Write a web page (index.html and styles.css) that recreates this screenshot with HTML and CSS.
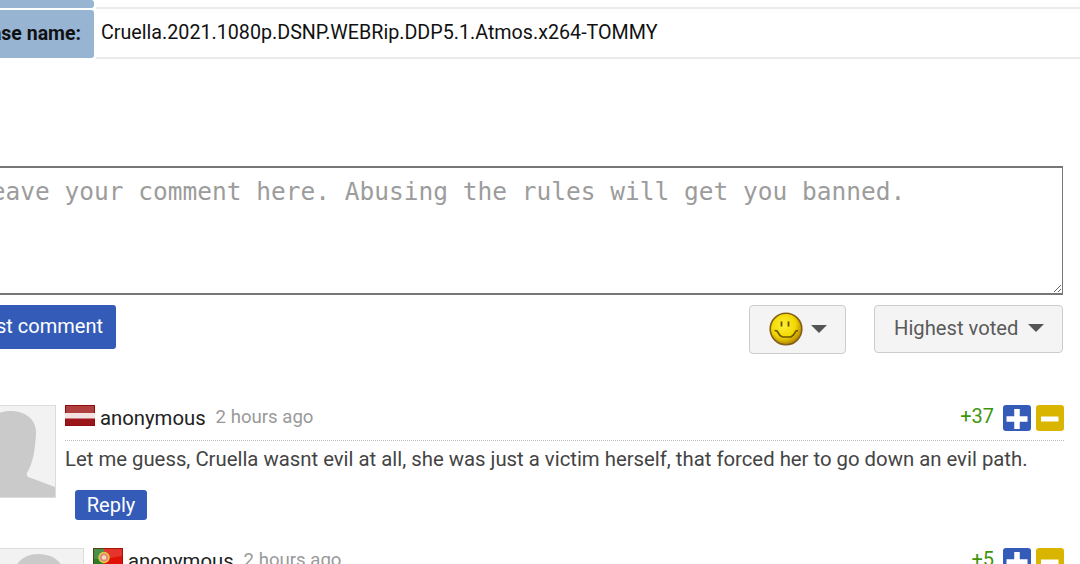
FILE: index.html
```
<!DOCTYPE html>
<html lang="en">
<head>
    <meta charset="UTF-8">
    <meta name="viewport" content="width=device-width, initial-scale=1.0">
    <title>Cruella subtitles</title>
    <link rel="stylesheet" href="styles.css">
</head>
<body>
    <div class="page">
        <div class="info">
            <div class="info-row previous">
                <div class="info-label"></div>
                <div class="info-value"></div>
            </div>
            <div class="info-row">
                <div class="info-label">Release name:</div>
                <div class="info-value"><span class="release">Cruella.2021.1080p.DSNP.WEBRip.DDP5.1.Atmos.x264-TOMMY</span></div>
            </div>
        </div>

        <div class="content">
            <textarea class="comment-box" placeholder="Leave your comment here. Abusing the rules will get you banned."></textarea>
            <div class="toolbar">
                <button class="post-btn">Post comment</button>
                <button class="dropdown smiley-btn">
                    <svg class="smiley" width="34" height="34" viewBox="0 0 34 34">
                        <defs>
                            <radialGradient id="face" cx="42%" cy="38%" r="64%">
                                <stop offset="0" stop-color="#ffee38"/>
                                <stop offset=".6" stop-color="#f2d800"/>
                                <stop offset="1" stop-color="#b07f00"/>
                            </radialGradient>
                        </defs>
                        <circle cx="17" cy="17" r="15.8" fill="url(#face)" stroke="#836019" stroke-width="1.6"/>
                        <path d="M12.5 9.5v5M19.5 9.5v5" stroke="#6b5200" stroke-width="1.8"/>
                        <path d="M5.5 18.5l2.500 .5 3 4.500 2.500 1.500h8.500l2.500-2 2.500-4 2-.5" fill="none" stroke="#705600" stroke-width="1.7"/>
                    </svg>
                    <span class="caret"></span>
                </button>
                <button class="dropdown sort-btn"><span class="sort-text">Highest voted</span><span class="caret"></span></button>
            </div>

            <div class="comment">
                <svg class="avatar" width="93" height="93" viewBox="0 0 93 93">
                    <rect x=".5" y=".5" width="92" height="92" fill="#f2f2f2" stroke="#dcdcdc"/>
                    <path d="M1 92V81c11-4 22-8 29-12-3-10-7-20-8-32C20 16 32 6 47 6s27 8 26 23c-1 14-2 27-9 39-1 3 1 4 4 5l24 9v10z" fill="#cacaca"/>
                </svg>
                <div class="comment-body">
                    <div class="comment-head">
                        <svg class="flag" width="30" height="22" viewBox="0 0 30 22">
                            <rect width="30" height="21" fill="#8e0d10"/>
                            <rect x="1" y="1" width="28" height="7" fill="#b04040"/>
                            <rect x="1" y="13" width="28" height="7" fill="#9c1518"/>
                            <rect y="8" width="30" height="5.500" fill="#f3e2e2"/>
                        </svg>
                        <span class="name">anonymous</span>
                        <span class="time">2 hours ago</span>
                        <span class="score">+37</span>
                        <svg class="vote" width="28" height="26" viewBox="0 0 28 26">
                            <rect width="28" height="26" rx="3" fill="#345bb8"/>
                            <path d="M14 4v20M3.500 14h21" stroke="#fff" stroke-width="5.500"/>
                        </svg>
                        <svg class="vote down" width="28" height="26" viewBox="0 0 28 26">
                            <rect width="28" height="26" rx="3" fill="#d9b500"/>
                            <path d="M5 14h17.500" stroke="#fff" stroke-width="5"/>
                        </svg>
                    </div>
                    <p class="comment-text">Let me guess, Cruella wasnt evil at all, she was just a victim herself, that forced her to go down an evil path.</p>
                    <button class="reply-btn">Reply</button>
                </div>
            </div>

            <div class="comment reply">
                <svg class="avatar" width="93" height="93" viewBox="0 0 93 93">
                    <rect x=".5" y=".5" width="92" height="92" fill="#f2f2f2" stroke="#dcdcdc"/>
                    <path d="M1 92V81c11-4 22-8 29-12-3-10-7-20-8-32C20 16 32 6 47 6s27 8 26 23c-1 14-2 27-9 39-1 3 1 4 4 5l24 9v10z" fill="#cacaca"/>
                </svg>
                <div class="comment-body">
                    <div class="comment-head">
                        <svg class="flag" width="30" height="22" viewBox="0 0 30 22">
                            <rect width="30" height="22" fill="#e01208"/>
                            <rect width="11" height="22" fill="#2c7b27"/>
                            <path d="M1 1h28v7l-18 3H1z" fill="#fff" opacity=".15"/>
                            <path d="M.5 22V.5h29V22" fill="none" stroke="#7c1408" opacity=".6"/>
                            <circle cx="11" cy="9.500" r="5" fill="#e2877a" stroke="#e0d040" stroke-width="1.400"/>
                            <circle cx="11" cy="9.500" r="2.200" fill="#f3dcc0"/>
                        </svg>
                        <span class="name">anonymous</span>
                        <span class="time">2 hours ago</span>
                        <span class="score">+5</span>
                        <svg class="vote" width="28" height="26" viewBox="0 0 28 26">
                            <rect width="28" height="26" rx="3" fill="#345bb8"/>
                            <path d="M14 4v20M3.500 14h21" stroke="#fff" stroke-width="5.500"/>
                        </svg>
                        <svg class="vote down" width="28" height="26" viewBox="0 0 28 26">
                            <rect width="28" height="26" rx="3" fill="#d9b500"/>
                            <path d="M5 14h17.500" stroke="#fff" stroke-width="5"/>
                        </svg>
                    </div>
                </div>
            </div>
        </div>
    </div>
</body>
</html>
```
FILE: styles.css
```
* {
    box-sizing: border-box;
}
body {
    margin: 0;
    height: 564px;
    overflow: hidden;
    background-color: #fff;
    font-family: Roboto, sans-serif;
    font-size: 20px;
    color: #444;
}
button {
    font-family: inherit;
    cursor: pointer;
}
.page {
    height: 564px;
    margin-left: -80px;
    overflow: hidden;
}
.info-row {
    display: flex;
    height: 50px;
}
.info-row.previous {
    height: 9px;
}
.info-label {
    width: 174px;
    height: 48px;
    margin-top: 1px;
    padding-right: 13px;
    border-radius: 3px;
    background-color: #97b4d3;
    color: #111;
    font-size: 19.5px;
    font-weight: bold;
    line-height: 47px;
    text-align: right;
}
.previous .info-label {
    height: 8px;
    margin-top: 0;
}
.info-value {
    flex: 1;
    margin-left: 2px;
    padding-left: 5px;
    border-bottom: 2px solid #ebebeb;
    color: #111;
    line-height: 47px;
}
.release {
    font-size: 19.7px;
}
.content {
    margin: 107px 17px 0 43px;
}
.comment-box {
    display: block;
    width: 100%;
    height: 129px;
    padding: 10px 12px;
    border: 1px solid #777;
    border-top-width: 2px;
    border-bottom-width: 2px;
    background-color: #fff;
    font-family: "DejaVu Sans Mono", monospace;
    font-size: 24.5px;
    line-height: 28px;
    resize: both;
}
.comment-box::placeholder {
    color: #9c9c9c;
}
.toolbar {
    display: flex;
    align-items: flex-start;
    height: 49px;
    margin-top: 10px;
}
.post-btn {
    height: 44px;
    width: 153px;
    margin-right: auto;
    padding: 0 13px 2px 0;
    border: none;
    border-radius: 3px;
    background-color: #345bb8;
    color: #fff;
    font-size: 20px;
    text-align: right;
}
.dropdown {
    display: flex;
    align-items: center;
    padding: 0 18px 2px 19px;
    border: 1px solid #ccc;
    border-radius: 4px;
    background-color: #f4f4f4;
    color: #5a5a5a;
    font-size: 20.2px;
}
.smiley-btn {
    width: 97px;
    height: 49px;
    margin-right: 28px;
}
.sort-btn {
    width: 189px;
    height: 48px;
}
.caret {
    margin-left: auto;
    border: 8px solid transparent;
    border-top-color: #555;
    border-bottom: none;
}
.comment {
    display: flex;
    align-items: flex-start;
    height: 143px;
    margin-top: 51px;
}
.reply {
    margin-top: 0;
    margin-left: 28px;
}
.avatar {
    flex: none;
    margin-right: 9px;
}
.comment-body {
    flex: 1;
    min-width: 0;
}
.comment-head {
    display: flex;
    height: 36px;
    margin-right: -1px;
    border-bottom: 1px dotted #bbb;
    line-height: 26px;
}
.name {
    margin-left: 5px;
    color: #222;
    font-size: 20.3px;
}
.time {
    margin: -1px auto 0 10px;
    color: #999;
    font-size: 18.6px;
}
.score {
    margin: -2px 9px 0 0;
    color: #3f960c;
}
.down {
    margin-left: 5px;
}
.comment-text {
    margin: 6px 0 0;
    font-size: 20.32px;
    line-height: 25px;
    white-space: nowrap;
}
.reply-btn {
    display: block;
    width: 72px;
    height: 30px;
    margin: 18px 0 0 10px;
    padding: 0;
    border: none;
    border-radius: 3px;
    background-color: #345bb8;
    color: #fff;
    font-size: 20px;
}
```
